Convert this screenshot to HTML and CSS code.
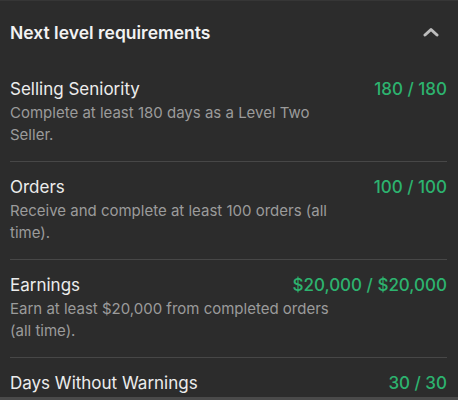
FILE: index.html
```html
<!DOCTYPE html>
<html>
<head>
<meta charset="utf-8">
<link rel="stylesheet" href="styles.css">
</head>
<body>
<div class="panel">
  <div class="header">
    <span class="header-title">Next level requirements</span>
    <svg class="chevron" width="16" height="10" viewBox="0 0 16 10"><polyline points="2,8 8,2.5 14,8" fill="none" stroke="#bdbdbd" stroke-width="3" stroke-linecap="round" stroke-linejoin="round"/></svg>
  </div>
  <div class="row">
    <div class="row-top"><span class="title">Selling Seniority</span><span class="value">180 / 180</span></div>
    <div class="desc">Complete at least 180 days as a Level Two Seller.</div>
  </div>
  <div class="row">
    <div class="row-top"><span class="title">Orders</span><span class="value">100 / 100</span></div>
    <div class="desc">Receive and complete at least 100 orders (all time).</div>
  </div>
  <div class="row">
    <div class="row-top"><span class="title">Earnings</span><span class="value">$20,000 / $20,000</span></div>
    <div class="desc">Earn at least $20,000 from completed orders (all time).</div>
  </div>
  <div class="row last">
    <div class="row-top"><span class="title">Days Without Warnings</span><span class="value">30 / 30</span></div>
  </div>
</div>
</body>
</html>
```
FILE: styles.css
```css
html, body {
  margin: 0;
  padding: 0;
  background: #4a4a4a;
}
body {
  font-family: Inter, "Noto Sans", sans-serif;
  -webkit-font-smoothing: antialiased;
}
.panel {
  height: 396px;
  overflow: hidden;
  background: #2c2c2c;
  border-top: 1px solid #363636;
  padding: 0 11px 0 10px;
}
.header {
  height: 62px;
  display: flex;
  align-items: center;
  justify-content: space-between;
}
.header-title {
  color: #f2f2f2;
  font-size: 17.5px;
  font-weight: 600;
}
.chevron {
  margin-right: 8px;
}
.row {
  padding: 14px 0 15px;
  border-bottom: 1px solid #474747;
}
.row + .row {
  padding-top: 13px;
}
.row.last {
  border-bottom: none;
}
.row-top {
  display: flex;
  justify-content: space-between;
  align-items: baseline;
  line-height: 25px;
}
.title {
  color: #ececec;
  font-size: 17px;
}
.value {
  color: #2db36f;
  font-size: 17px;
  font-weight: 500;
}
.desc {
  color: #9b9b9b;
  font-size: 15px;
  line-height: 22px;
  max-width: 330px;
}
```
